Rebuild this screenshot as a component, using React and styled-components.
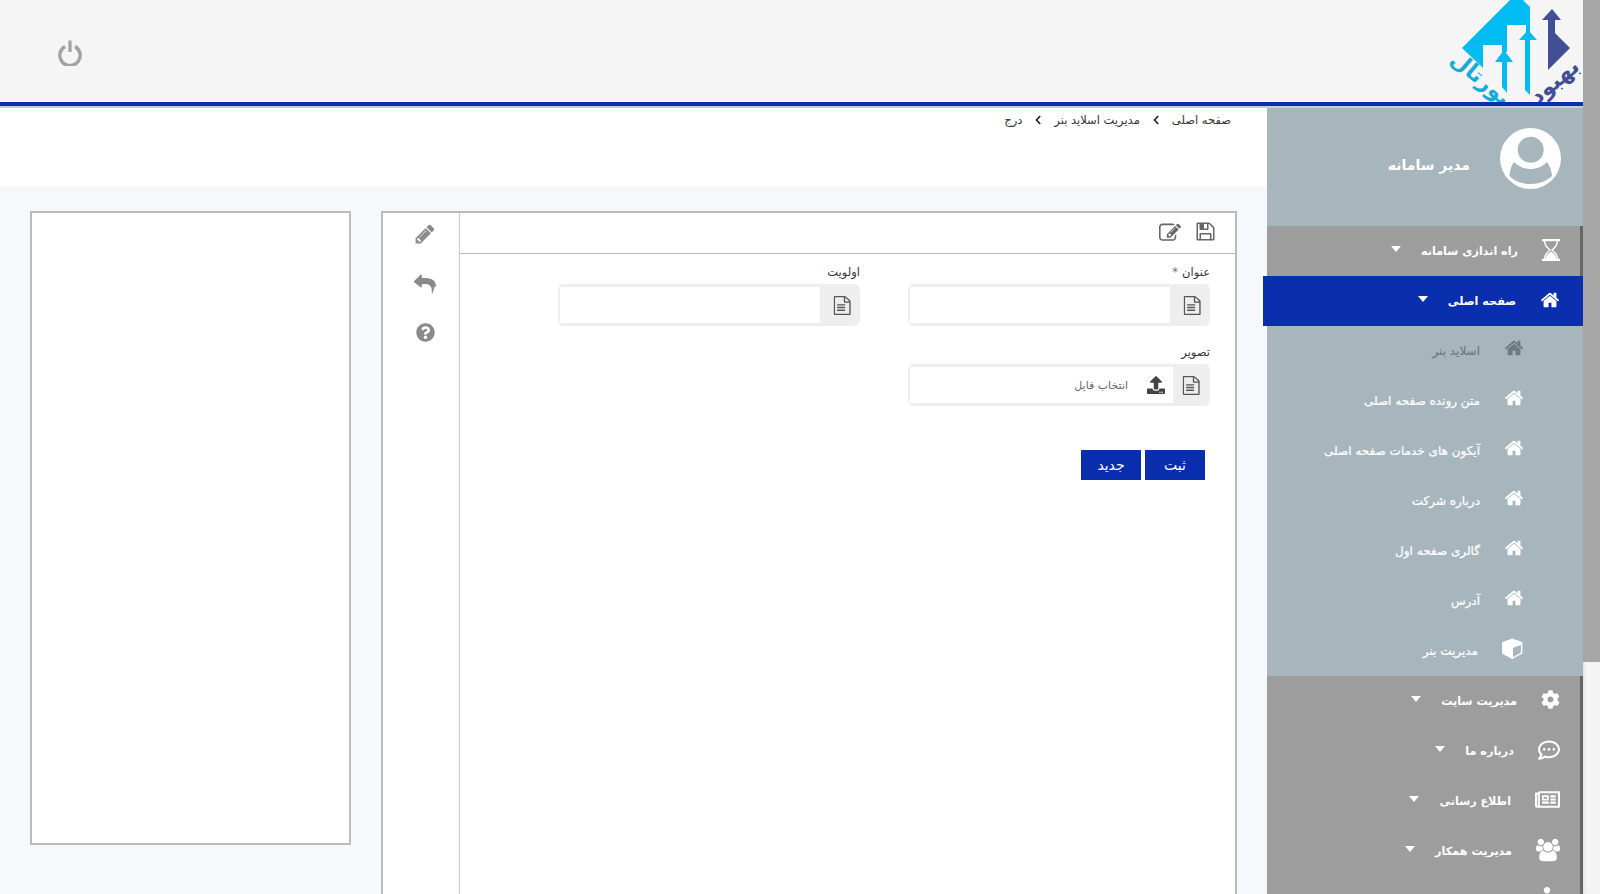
import React from "react";
import styled, { createGlobalStyle } from "styled-components";
import { FaChevronLeft, FaCog, FaMale, FaQuestionCircle, FaRegCommentDots, FaRegNewspaper, FaUpload } from "react-icons/fa";

const Global = createGlobalStyle`
  html, body { margin: 0; padding: 0; height: 100%; overflow: hidden; background: #fff; }
  body { font-family: "DejaVu Sans", "Noto Sans", sans-serif; font-size: 12px; color: #333; }
  * { box-sizing: border-box; }
`;

const Shell = styled.div`display: flex; width: 1600px; height: 894px; overflow: hidden;`;
const Page = styled.div`flex: 1; min-width: 0; direction: rtl; display: flex; flex-direction: column; height: 894px; overflow: hidden;`;
const ScrollTrack = styled.div`width: 17px; flex: none; background: #f4f4f4; box-shadow: inset 3px 0 3px -2px #ddd;`;
const ScrollThumb = styled.div`height: 662px; background: #a6a6a6;`;

const Header = styled.header`
  height: 106px; flex: none; background: #f5f5f5;
  border-bottom: 4px solid #0a2fae;
  box-shadow: 0 2px 0 #c6cbd8;
  display: flex; justify-content: space-between; align-items: flex-start;
  position: relative; z-index: 2;
  margin-bottom: 2px;
`;
const PowerBtn = styled.div`margin: 40px 0 0 58px; width: 24px; height: 26px; line-height: 0;`;
const LogoClip = styled.div`width: 163px; height: 102px; overflow: hidden; line-height: 0;`;

const Body = styled.div`flex: 1; min-height: 0; display: flex;`;

const Sidebar = styled.aside`width: 316px; flex: none; display: flex; flex-direction: column;`;
const Profile = styled.div`
  height: 118px; flex: none; background: #a7b6bc; display: flex; align-items: flex-start;
  padding: 20px 22px 0 0; gap: 30px; color: #fff;
`;
const ProfileName = styled.div`font-size: 14px; font-weight: bold; margin-top: 29px; white-space: nowrap;`;
const Avatar = styled.div`width: 61px; height: 61px; line-height: 0;`;

const Row = styled.div`
  height: 50px; flex: none; display: flex; align-items: center; gap: 24px; color: #fff;
  background: #9d9d9d; border-right: 3px solid #666; padding-right: 20px;
  svg { flex: none; margin-bottom: 3px; }
`;
const ActiveRow = styled(Row)`
  background: #0a2fae; border-right: 0; padding-right: 23px; margin-left: -4px; position: relative; z-index: 1;
`;
const SubRow = styled.div`
  height: 50px; flex: none; display: flex; align-items: center; gap: 24px; padding-right: 59px; background: #a7b6bc;
  color: ${(p) => (p.$muted ? "#6f7a7f" : "#fff")};
  svg { flex: none; margin-bottom: 7px; }
`;
const RowText = styled.span`font-size: 11.2px; font-weight: bold; white-space: nowrap;`;
const SubText = styled.span`font-size: 12px; white-space: nowrap; -webkit-text-stroke: 0.2px currentColor;`;
const Caret = styled.span`
  width: 10px; height: 5px; margin-right: -4px; margin-bottom: 5px;
  border-left: 5px solid transparent; border-right: 5px solid transparent; border-top: 6px solid #fff;
`;

const Content = styled.main`flex: 1; min-width: 0; display: flex; flex-direction: column; background: #f6f8fc;`;
const Breadcrumb = styled.nav`
  height: 78px; flex: none; background: #fff; padding: 3px 36px 0 0;
  display: flex; align-items: flex-start; gap: 11px; font-size: 11.5px; color: #333; line-height: 18px;
  svg { margin-top: 4px; color: #222; }
`;
const Panels = styled.div`flex: 1; min-height: 0; display: flex; gap: 30px; padding: 25px 30px 0; overflow: hidden;`;
const MainPanel = styled.section`width: 856px; flex: none; height: 760px; border: 2px solid #bbb; background: #fff; display: flex;`;
const SidePanel = styled.section`width: 321px; flex: none; height: 634px; border: 2px solid #bbb; background: #fff;`;

const FormArea = styled.div`flex: 1; min-width: 0; border-left: 1px solid #ccc;`;
const Toolbar = styled.div`
  height: 41px; border-bottom: 1px solid #bbb; display: flex; align-items: center; gap: 14px; padding: 0 19px 4px 0; color: #666;
`;
const EditIcon = styled.span`line-height: 0; margin-top: 4px;`;
const ToolRail = styled.div`
  width: 76px; flex: none; display: flex; flex-direction: column; align-items: center; gap: 28px; padding: 10px 0 0 8px; color: #8a8a8a;
  svg { display: block; }
`;
const Form = styled.form`padding: 9px 25px 0 0;`;
const FieldGrid = styled.div`display: grid; grid-template-columns: 302px 302px; column-gap: 48px;`;
const Field = styled.div`margin-bottom: 17px;`;
const Label = styled.label`display: block; height: 21px; line-height: 18px; font-size: 11.5px; color: #333;`;
const Required = styled.span`color: #777; margin-right: 4px;`;
const InputGroup = styled.div`height: 42px; display: flex; border-radius: 6px; background: #eee; overflow: hidden; padding: 3px 0 3px 2px;`;
const Addon = styled.span`
  width: ${(p) => p.$w || 40}px; flex: none; margin: -3px 0; display: flex; align-items: center; justify-content: center; color: #555;
  padding-left: ${(p) => (p.$w ? 0 : 4)}px;
`;
const TextInput = styled.input`flex: 1; min-width: 0; border: 0; background: #fff; outline: 0;`;
const FileBox = styled.div`
  flex: 1; min-width: 0; background: #fff; display: flex; align-items: center; gap: 19px; padding-right: 8px;
  font-size: 11px; color: #666; svg { color: #444; }
`;
const Actions = styled.div`display: flex; gap: 4px; margin: 27px 5px 0 0;`;
const Button = styled.button`
  width: 60px; height: 30px; border: 0; background: #0a2fae; color: #fff; font: 14px "DejaVu Sans", sans-serif; padding: 0;
`;

const Fa4 = ({ size = 19, d, vb = "0 0 1792 1792", rule }) => (
  <svg width={size} height={size} viewBox={vb} fill="currentColor" fillRule={rule}><path d={d} /></svg>
);

const HOME = "M1472 992v480q0 26-19 45t-45 19h-384v-384H768v384H384q-26 0-45-19t-19-45V992q0-1 .5-3t.5-3l575-474 575 474q1 2 1 6zm223-69l-62 74q-8 9-21 11h-3q-13 0-21-7L896 424l-692 577q-12 8-24 7-13-2-21-11l-62-74q-8-10-7-23.5t11-21.5l719-599q32-26 76-26t76 26l244 204V288q0-14 9-23t23-9h192q14 0 23 9t9 23v408l219 182q10 8 11 21.5t-7 23.5z";
const FILE = "M1596 380q28 28 48 76t20 88v1152q0 40-28 68t-68 28H176q-40 0-68-28t-28-68V96q0-40 28-68T176 0h896q40 0 88 20t76 48zm-444-244v376h376q-10-29-22-41l-313-313q-12-12-41-22zm384 1528V640h-416q-40 0-68-28t-28-68V128H192v1536h1344zM384 800q0-14 9-23t23-9h704q14 0 23 9t9 23v64q0 14-9 23t-23 9H416q-14 0-23-9t-9-23v-64zm736 224q14 0 23 9t9 23v64q0 14-9 23t-23 9H416q-14 0-23-9t-9-23v-64q0-14 9-23t23-9h704zm0 256q14 0 23 9t9 23v64q0 14-9 23t-23 9H416q-14 0-23-9t-9-23v-64q0-14 9-23t23-9h704z";
const SAVE = "M512 1536h768v-384H512v384zm896 0h128V640q0-14-10-38.500t-20-34.500l-281-281q-10-10-34-20t-39-10v416q0 40-28 68t-68 28H480q-40 0-68-28t-28-68V256H256v1280h128V1120q0-40 28-68t68-28h832q40 0 68 28t28 68v416zM1024 608V288q0-13-9.500-22.500T992 256H800q-13 0-22.500 9.500T768 288v320q0 13 9.500 22.500T800 640h192q13 0 22.500-9.500T1024 608zm640 32v928q0 40-28 68t-68 28H224q-40 0-68-28t-28-68V224q0-40 28-68t68-28h928q40 0 88 20t76 48l280 280q28 28 48 76t20 88z";
const EDIT = "M888 1184l116-116-152-152-116 116v56h96v96h56zm440-720q-16-16-33 1L945 815q-17 17-1 33t33-1l350-350q17-17 1-33zm80 594v190q0 119-84.500 203.500T1120 1536H288q-119 0-203.500-84.500T0 1248V416q0-119 84.500-203.500T288 128h832q63 0 117 25 15 7 18 23 3 17-9 29l-49 49q-14 14-32 8-23-6-45-6H288q-66 0-113 47t-47 113v832q0 66 47 113t113 47h832q66 0 113-47t47-113v-126q0-13 9-22l64-64q15-15 35-7t20 29zm-96-738l288 288-672 672H640V992zm444 132l-92 92-288-288 92-92q27-27 68-27t68 27l152 152q27 28 27 68t-27 68z";
const PENCIL = "M491 1536l91-91-235-235-91 91v107h128v128h107zm523-928q0-22-22-22-10 0-17 7l-542 542q-7 7-7 17 0 22 22 22 10 0 17-7l542-542q7-7 7-17zm-54-192l416 416-832 832H128v-416zm683 96q0 53-37 90l-166 166-416-416 166-165q36-38 90-38 53 0 91 38l235 234q37 39 37 91z";
const REPLY = "M1664 1120q0 166-127 451-3 7-10.500 24t-13.500 30-13 22q-12 17-28 17-15 0-23.500-10t-8.500-25q0-9 2.500-26.500t2.500-23.500q5-68 5-123 0-101-17.500-181t-48.500-138.500-80-101-105.500-69.500-133-42.500-154-21.500-175.500-6H640v224q0 26-19 45t-45 19-45-19L19 749Q0 730 0 704t19-45L531 147q19-19 45-19t45 19 19 45v224h224q713 0 875 403 53 134 53 301z";
const CUBE = "M896 1629l640-349V644l-640 233v752zm768-1117v768q0 35-18 65t-49 47l-704 384q-28 16-61 16t-61-16l-704-384q-31-17-49-47t-18-65V512q0-40 23-73t61-47l704-256q22-8 44-8t44 8l704 256q38 14 61 47t23 73z";
const USERS = "M593 896q-162 5-265 128H194q-82 0-138-40.500T0 865q0-353 124-353 6 0 43.500 21t97.500 42.500T384 597q67 0 133-23-5 37-5 66 0 139 81 256zm1071 637q0 120-73 189.500t-194 69.500H523q-121 0-194-69.500T256 1533q0-53 3.500-103.500t14-109T300 1212t43-97.500 62-81 85.500-53.500T602 960q10 0 43 21.500t73 48 107 48 135 21.500 135-21.500 107-48 73-48 43-21.500q61 0 111.500 20t85.500 53.500 62 81 43 97.500 26.500 108.500 14 109 3.500 103.500zM640 256q0 106-75 181t-181 75-181-75-75-181 75-181 181-75 181 75 75 181zm704 384q0 159-112.500 271.500T960 1024 688.500 911.500 576 640t112.500-271.500T960 256t271.500 112.500T1344 640zm576 225q0 78-56 118.500t-138 40.500h-134q-103-123-265-128 81-117 81-256 0-29-5-66 66 23 133 23 59 0 119-21.500t97.500-42.500 43.500-21q124 0 124 353zm-128-609q0 106-75 181t-181 75-181-75-75-181 75-181 181-75 181 75 75 181z";

const Hourglass = () => (
  <svg width="18" height="22" viewBox="0 0 18 22" fill="none" stroke="#fff">
    <path d="M0 1h18M0 21h18" strokeWidth="2.4" />
    <path d="M2.500 1.500c0 5 2 7 5.500 9.500-3.500 2.500-5.500 4.500-5.500 9.500M15.500 1.500c0 5-2 7-5.500 9.500 3.500 2.500 5.500 4.500 5.500 9.500" strokeWidth="1.4" />
    <path d="M3.500 20c.5-3.500 2.500-5.500 5.500-7.500 3 2 5 4 5.500 7.500z" fill="#fff" stroke="none" />
  </svg>
);

const Power = () => (
  <svg width="24" height="26" viewBox="0 0 24 26" fill="none" stroke="#a2a2a2" strokeWidth="3.4">
    <path d="M7 6.500a10.200 10.200 0 1 0 10 0" />
    <path d="M12 0.500v11.500" strokeWidth="3.2" />
  </svg>
);

const Logo = () => (
  <svg width="163" height="102" viewBox="1420 0 163 102" style={{ display: "block" }}>
    <polygon points="1462,48 1510,0 1523,0 1530,7 1530,35 1526,35 1526,25 1507,25 1507,52 1502,52 1502,45 1483,45 1483,68" fill="#00bcf0" />
    <polygon points="1504,50 1513,62 1507,62 1507,93 1502,87 1502,62 1495,62" fill="#00bcf0" />
    <polygon points="1528,30 1537,40 1530,40 1530,95 1525,90 1525,40 1519,40" fill="#00bcf0" />
    <polygon points="1552,9 1561,20 1555,20 1555,33 1570,48 1548,70 1548,20 1542,20" fill="#434f95" />
    <text x="1476" y="84" fontSize="22" fontWeight="bold" fill="#18abd8" transform="rotate(40 1476 84)" fontFamily="DejaVu Sans, sans-serif" textAnchor="middle">پورتال</text>
    <text x="1559" y="87" fontSize="22" fontWeight="bold" fill="#434f95" transform="rotate(-40 1559 87)" fontFamily="DejaVu Sans, sans-serif" textAnchor="middle">بهبود</text>
  </svg>
);

const AvatarIcon = () => (
  <svg width="61" height="61" viewBox="0 0 61 61">
    <circle cx="30.500" cy="30.500" r="30.500" fill="#fff" />
    <circle cx="30.700" cy="21.700" r="13" fill="#a7b6bc" />
    <path d="M9.500 48C10 41 12 37 14 34C19 39 25 41 30.700 41C36 41 42 39 47 34C49 37 51.500 41 52 48C47 53 39 56 30.700 56C22 56 14 53 9.500 48Z" fill="#a7b6bc" />
  </svg>
);

const sub = [
  ["اسلاید بنر", true],
  ["متن رونده صفحه اصلی"],
  ["آیکون های خدمات صفحه اصلی"],
  ["درباره شرکت"],
  ["گالری صفحه اول"],
  ["آدرس"],
];

const bottom = [
  [<FaCog size={19} key="i" />, "مدیریت سایت"],
  [<FaRegCommentDots size={22} key="i" />, "درباره ما"],
  [<FaRegNewspaper size={25} key="i" />, "اطلاع رسانی"],
  [<Fa4 size={24} d={USERS} vb="0 0 1920 1792" key="i" />, "مدیریت همکار"],
];

const FileIcon = () => <Fa4 size={19} d={FILE} />;

export default function App() {
  return (
    <>
      <Global />
      <Shell>
        <Page>
          <Header>
            <LogoClip><Logo /></LogoClip>
            <PowerBtn><Power /></PowerBtn>
          </Header>
          <Body>
            <Sidebar>
              <Profile>
                <Avatar><AvatarIcon /></Avatar>
                <ProfileName>مدیر سامانه</ProfileName>
              </Profile>
              <Row><Hourglass /><RowText>راه اندازی سامانه</RowText><Caret /></Row>
              <ActiveRow><Fa4 size={20} d={HOME} /><RowText>صفحه اصلی</RowText><Caret /></ActiveRow>
              {sub.map(([t, m]) => (
                <SubRow key={t} $muted={m}><Fa4 size={20} d={HOME} /><SubText>{t}</SubText></SubRow>
              ))}
              <SubRow><Fa4 size={22} d={CUBE} rule="evenodd" /><SubText>مدیریت بنر</SubText></SubRow>
              {bottom.map(([icon, t]) => (
                <Row key={t}>{icon}<RowText>{t}</RowText><Caret /></Row>
              ))}
              <Row><FaMale size={26} /></Row>
            </Sidebar>
            <Content>
              <Breadcrumb>
                <span>صفحه اصلی</span><FaChevronLeft size={10} />
                <span>مدیریت اسلاید بنر</span><FaChevronLeft size={10} />
                <span>درج</span>
              </Breadcrumb>
              <Panels>
                <MainPanel>
                  <FormArea>
                    <Toolbar><Fa4 size={21} d={SAVE} /><EditIcon><Fa4 size={22} d={EDIT} /></EditIcon></Toolbar>
                    <Form>
                      <FieldGrid>
                        <Field>
                          <Label>عنوان<Required>*</Required></Label>
                          <InputGroup><Addon><FileIcon /></Addon><TextInput /></InputGroup>
                        </Field>
                        <Field>
                          <Label>اولویت</Label>
                          <InputGroup><Addon><FileIcon /></Addon><TextInput /></InputGroup>
                        </Field>
                        <Field>
                          <Label>تصویر</Label>
                          <InputGroup>
                            <Addon $w={37}><FileIcon /></Addon>
                            <FileBox><FaUpload size={18} /><span>انتخاب فایل</span></FileBox>
                          </InputGroup>
                        </Field>
                      </FieldGrid>
                      <Actions><Button type="button">ثبت</Button><Button type="button">جدید</Button></Actions>
                    </Form>
                  </FormArea>
                  <ToolRail>
                    <Fa4 size={22} d={PENCIL} />
                    <Fa4 size={22} d={REPLY} />
                    <FaQuestionCircle size={19} />
                  </ToolRail>
                </MainPanel>
                <SidePanel />
              </Panels>
            </Content>
          </Body>
        </Page>
        <ScrollTrack><ScrollThumb /></ScrollTrack>
      </Shell>
    </>
  );
}
